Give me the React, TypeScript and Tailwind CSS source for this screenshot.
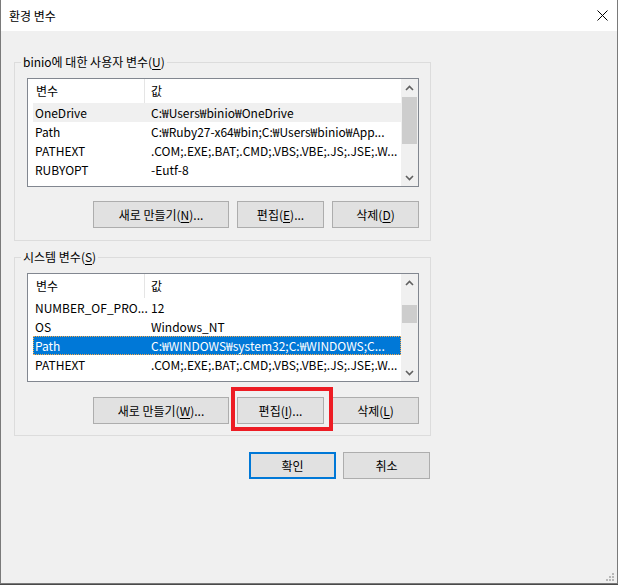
import type { ReactNode } from "react";

type Row = { name: string; value: string };

const userVars: Row[] = [
  { name: "OneDrive", value: "C:₩Users₩binio₩OneDrive" },
  { name: "Path", value: "C:₩Ruby27-x64₩bin;C:₩Users₩binio₩App..." },
  { name: "PATHEXT", value: ".COM;.EXE;.BAT;.CMD;.VBS;.VBE;.JS;.JSE;.W..." },
  { name: "RUBYOPT", value: "-Eutf-8" },
];

const systemVars: Row[] = [
  { name: "NUMBER_OF_PRO...", value: "12" },
  { name: "OS", value: "Windows_NT" },
  { name: "Path", value: "C:₩WINDOWS₩system32;C:₩WINDOWS;C..." },
  { name: "PATHEXT", value: ".COM;.EXE;.BAT;.CMD;.VBS;.VBE;.JS;.JSE;.W..." },
];

// label text with the access key underlined, e.g. 편집(E)...
const Mnemonic = ({ before, k, after = "" }: { before: string; k: string; after?: string }) => (
  <span>
    {before}(<span className="underline underline-offset-2">{k}</span>){after}
  </span>
);

const WinButton = ({ children, w, primary }: { children: ReactNode; w: string; primary?: boolean }) => (
  <button
    className={`${w} h-[27px] bg-[#e1e1e1] text-[12px] text-black flex items-center justify-center ${
      primary ? "border-2 border-[#0078d7]" : "border border-[#adadad]"
    }`}
  >
    {children}
  </button>
);

const Chevron = ({ up }: { up?: boolean }) => (
  <svg width="9" height="6" viewBox="0 0 9 6">
    <path
      d={up ? "M1 5 L4.5 1.5 L8 5" : "M1 1 L4.5 4.5 L8 1"}
      fill="none"
      stroke="#606060"
      strokeWidth="1.6"
    />
  </svg>
);

const ListView = ({
  rows,
  hover,
  selected,
  thumbTop,
  thumbHeight,
}: {
  rows: Row[];
  hover?: number;
  selected?: number;
  thumbTop: string;
  thumbHeight: string;
}) => (
  <div className="w-[392px] h-[109px] border border-[#828790] bg-white flex overflow-hidden">
    <div className="flex-1 flex flex-col overflow-hidden">
      <div className="h-[24px] flex shrink-0 items-center">
        <div className="w-[117px] h-full pl-[8px] flex items-center border-r border-[#e5e5e5]">변수</div>
        <div className="pl-[6px]">값</div>
      </div>
      {rows.map((r, i) => {
        const sel = i === selected;
        return (
          <div
            key={r.name}
            className={`ml-[5px] h-[19px] shrink-0 flex items-center whitespace-nowrap ${
              sel
                ? "bg-[#0078d7] text-white outline outline-1 outline-dotted outline-offset-[-1px] outline-[#f7a94a]"
                : i === hover
                ? "bg-[#f0f0f0]"
                : ""
            }`}
          >
            <div className="w-[118px] pl-[2px] overflow-hidden">{r.name}</div>
            <div className="flex-1 overflow-hidden">{r.value}</div>
          </div>
        );
      })}
    </div>
    <div className="w-[17px] bg-[#f0f0f0] flex flex-col items-center">
      <div className="h-[17px] w-full flex items-center justify-center">
        <Chevron up />
      </div>
      <div className="relative flex-1 w-full">
        <div className={`absolute left-[1px] w-[15px] bg-[#cdcdcd] ${thumbTop} ${thumbHeight}`} />
      </div>
      <div className="h-[17px] w-full flex items-center justify-center">
        <Chevron />
      </div>
    </div>
  </div>
);

const GroupBox = ({ label, h, children }: { label: ReactNode; h: string; children: ReactNode }) => (
  <div className={`relative ml-[13px] w-[417px] ${h} border border-[#dcdcdc] pt-[15px] pl-[12px]`}>
    <span className="absolute -top-[10px] left-[6px] px-[2px] bg-[#f0f0f0] leading-[17px]">{label}</span>
    {children}
  </div>
);

export default function App() {
  return (
    <div className="w-[618px] h-[585px] bg-[#4a4a4a] font-['Noto_Sans_CJK_KR',sans-serif] text-[12px] text-black">
      <div className="w-[618px] h-[584px] flex flex-col bg-[#f0f0f0] border-l border-r border-b border-[#7a7a7a]">
        {/* title bar */}
        <div className="h-[31px] shrink-0 bg-white flex items-center justify-between pl-[8px] pr-[9px]">
          <span>환경 변수</span>
          <svg width="11" height="11" viewBox="0 0 11 11">
            <path d="M0.5 0.5 L10.5 10.5 M10.5 0.5 L0.5 10.5" stroke="#000" strokeWidth="1" />
          </svg>
        </div>

        <div className="mt-[31px]">
          <GroupBox label={<Mnemonic before="binio에 대한 사용자 변수" k="U" />} h="h-[179px]">
            <ListView rows={userVars} hover={0} thumbTop="top-[1px]" thumbHeight="h-[47px]" />
            <div className="mt-[14px] mr-[11px] flex justify-end gap-[8px]">
              <WinButton w="w-[136px]">
                <Mnemonic before="새로 만들기" k="N" after="..." />
              </WinButton>
              <WinButton w="w-[87px]">
                <Mnemonic before="편집" k="E" after="..." />
              </WinButton>
              <WinButton w="w-[87px]">
                <Mnemonic before="삭제" k="D" />
              </WinButton>
            </div>
          </GroupBox>
        </div>

        <div className="mt-[16px]">
          <GroupBox label={<Mnemonic before="시스템 변수" k="S" />} h="h-[179px]">
            <ListView rows={systemVars} selected={2} thumbTop="top-[14px]" thumbHeight="h-[18px]" />
            <div className="mt-[15px] mr-[11px] flex justify-end gap-[8px]">
              <WinButton w="w-[136px]">
                <Mnemonic before="새로 만들기" k="W" after="..." />
              </WinButton>
              <div className="relative">
                <WinButton w="w-[87px]">
                  <Mnemonic before="편집" k="I" after="..." />
                </WinButton>
                {/* red highlight drawn over the screenshot */}
                <div className="absolute -left-[6px] -top-[10px] w-[102px] h-[44px] border-4 border-[#ed1c24]" />
              </div>
              <WinButton w="w-[87px]">
                <Mnemonic before="삭제" k="L" />
              </WinButton>
            </div>
          </GroupBox>
        </div>

        <div className="mt-[16px] ml-[248px] flex gap-[7px]">
          <WinButton w="w-[87px]" primary>
            확인
          </WinButton>
          <WinButton w="w-[87px]">취소</WinButton>
        </div>

        <div className="mt-auto mb-[1px] mr-[2px] self-end">
          <svg width="9" height="9" viewBox="0 0 9 9">
            <g fill="#b8b8b8">
              <rect x="6" y="0" width="2" height="2" />
              <rect x="3" y="3" width="2" height="2" />
              <rect x="6" y="3" width="2" height="2" />
              <rect x="0" y="6" width="2" height="2" />
              <rect x="3" y="6" width="2" height="2" />
              <rect x="6" y="6" width="2" height="2" />
            </g>
          </svg>
        </div>
      </div>
    </div>
  );
}
